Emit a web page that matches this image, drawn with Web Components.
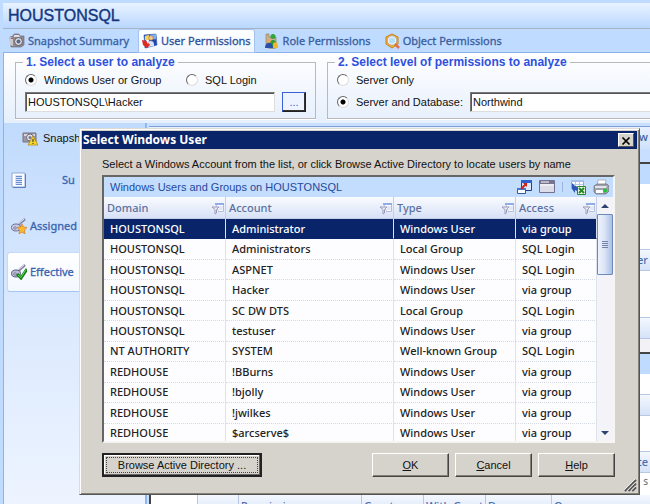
<!DOCTYPE html>
<html lang="en">
<head>
<meta charset="utf-8">
<title>HOUSTONSQL</title>
<style>
html,
body {
    height: 100%;
    margin: 0;
    overflow: hidden;
}
body {
    font: 11px/14px "Liberation Sans", Arial, sans-serif;
    color: #111;
    background: #bfdbff;
    --ui: "Noto Sans", "Open Sans", sans-serif;
    --classic: "Liberation Sans", Arial, sans-serif;
}
</style>
</head>
<body>
<permissions-page></permissions-page>
<script>

const ICONS = {
    camera: `
        <path d="M1 4l3-1 1-2h5l1 2h4v9l-3 2H2z" fill="#8d8a92" stroke="#66636e" stroke-width=".6"/>
        <path d="M1 4l3 1v8l-3-1z" fill="#c9c5c9"/><path d="M5 2h5l1 2H5z" fill="#e0dde2"/>
        <circle cx="9.500" cy="8.500" r="4" fill="#d9dbe2" stroke="#5f5d69"/>
        <circle cx="9.500" cy="8.500" r="2" fill="#5b6684"/><path d="M2 5h2v1H2z" fill="#b55"/>`,
    cameraWarn: `
        <path d="M1 3h13v9H1z" fill="#9d98a4" stroke="#77727f"/><path d="M2 4h11v2H2z" fill="#dcd6dd"/>
        <circle cx="8" cy="7.500" r="3.500" fill="#e6e3ea" stroke="#6d6979"/><circle cx="8" cy="7.500" r="1.500" fill="#78748a"/>
        <path d="M11 6l5 9H6z" fill="#fbd62c" stroke="#a9850c" stroke-width=".7"/><path d="M10.500 9h1v3h-1zM10.500 13h1v1h-1z" fill="#222"/>`,
    user: `
        <path d="M2 2l12-1 1 11-12 3z" fill="#2f62cf" stroke="#25469a" stroke-width=".6"/>
        <path d="M3 3l4-1v5H3z" fill="#f3d35a"/><path d="M8 2l6-1v5H8z" fill="#7cb2f4"/><path d="M9 7h5v5l-5 1z" fill="#1f47a8"/>
        <circle cx="9" cy="5" r="2.300" fill="#f4c99a" stroke="#a75d2c" stroke-width=".5"/>
        <path d="M5 12c0-5 7-5 7-1v2l-6 1z" fill="#d8dff4"/><path d="M0 7l5 1 3 4-3 3-4-3z" fill="#d92d22"/><path d="M4 7h3l-1 4z" fill="#fff"/>`,
    role: `
        <path d="M2 1h3v3h7v11l-5 1-5-2z" fill="#c7b08b" stroke="#806845" stroke-width=".5"/>
        <circle cx="9" cy="3.500" r="2.500" fill="#31a43a"/><path d="M5 13c0-8 8-8 8 0l-4 2z" fill="#2c9c35"/>
        <circle cx="5" cy="8" r="2" fill="#e6a764"/><path d="M1 15c0-7 8-7 8 0z" fill="#2750a8"/>
        <path d="M9 11c1-3 5-2 5 2v2H9z" fill="#f0b62c"/>`,
    object: `
        <path d="M8 1l6 3v7l-6 4-6-4V4z" fill="#f3b13a" stroke="#cf8113"/>
        <circle cx="8" cy="7.500" r="4" fill="#b9e0fa" stroke="#fff" stroke-width="1.500"/>
        <circle cx="8" cy="7.500" r="4.600" fill="none" stroke="#7a8496" stroke-width=".6"/>
        <path d="M11 11l4 4" stroke="#e1714d" stroke-width="2.500"/>`,
    report: `
        <path d="M1 1h13v14H1z" fill="#fff" stroke="#8ca6d8"/><path d="M14.500 2v13.500H2" fill="none" stroke="#5c7dbd"/>
        <path d="M4 3h7v10H4z" fill="#d5e2f8"/><path d="M5 4.500h6M5 6.500h6M5 8.500h6M5 10.500h6M5 12.500h6" stroke="#6a8fd0"/>`,
    keyStar: `
        <path d="M14 1L6 8" stroke="#8788a6" stroke-width="2.500"/><path d="M13 1L6 7" stroke="#e9ebf7"/>
        <ellipse cx="5" cy="9.500" rx="4.500" ry="3.500" fill="#c9cce4" stroke="#71729a"/><circle cx="4" cy="10" r="1.200" fill="#fff" stroke="#71729a"/>
        <path d="M11 6l1.500 3 3.500.5-2.500 2.500.5 4-3-2-3 2 .5-4L6 9.500 9.500 9z" fill="#f9b82f" stroke="#cc6c10" stroke-width=".6"/>`,
    keyCheck: `
        <path d="M14 1L6 8" stroke="#8788a6" stroke-width="2.500"/><path d="M13 1L6 7" stroke="#e9ebf7"/>
        <ellipse cx="5" cy="9.500" rx="4.500" ry="3.500" fill="#b9bcd2" stroke="#5c5d82"/><circle cx="4" cy="10" r="1.200" fill="#fff" stroke="#71729a"/>
        <path d="M6 10l4 4 6-9" fill="none" stroke="#157d18" stroke-width="3"/><path d="M7 11l3 2.500 5-8" fill="none" stroke="#5be04e"/>`,
    filter: `
        <path d="M6.500 3.500h8v8h-5z" fill="#fff" stroke="#b4c1dd"/><path d="M6 3h9v2H6z" fill="#8fade4"/><path d="M10 7h4M10 9h4" stroke="#c5d2ec"/>
        <path d="M3 7h7L7.500 9.500V13L6 14V9.500z" fill="#efeef7" stroke="#9c9abb"/>`,
    chooser: `
        <path d="M5.500 1.500h10v10h-10z" fill="#dbe7fb" stroke="#1d3f94"/><path d="M5 1h11v3H5z" fill="#2d62ce"/>
        <path d="M1.500 10.500h8v4h-8z" fill="#fff" stroke="#33589f"/><path d="M1 9h9v2H1z" fill="#4677cd"/>
        <path d="M5 10l5-5" stroke="#cc2419" stroke-width="2"/><path d="M7 4h4v4z" fill="#cc2419"/>`,
    panel: `
        <path d="M.5 1.500h15v12H.5z" fill="#dcdde9" stroke="#73718d"/><path d="M1 2h14v3H1z" fill="#77758f"/><path d="M2 3h8" stroke="#fff"/><path d="M1 6h14" stroke="#fff"/>`,
    excel: `
        <path d="M1.500 1.500h12v8h-12z" fill="#fff" stroke="#8ba7da"/><path d="M1 1h13v2H1z" fill="#a5bfe9"/><path d="M5.500 3v6M9.500 3v6M2 5.500h11" stroke="#b6c8e8"/>
        <path d="M2 4v6l3 4v-3l4 2V8L5 7z" fill="#2c58b3"/>
        <path d="M7.500 7.500h8v8h-8z" fill="#e9f7e5" stroke="#238727"/><path d="M9 9l5 5M14 9l-5 5" stroke="#238727" stroke-width="2"/>`,
    printer: `
        <path d="M5 1h8l-1 6H4z" fill="#fff" stroke="#9899a6" stroke-width=".7"/><path d="M1 7l3-2h10l2 2v5l-3 3H3l-2-2z" fill="#9fa0ad" stroke="#696a77" stroke-width=".7"/>
        <path d="M2 7h12l-1 2H2z" fill="#e3e4ea"/><path d="M3 11h7v3H3z" fill="#fff"/><circle cx="12" cy="11.500" r="2" fill="#22c331"/>`,
    cross: `<path d="M4 4l8 8M12 4l-8 8" stroke="#000" stroke-width="2"/>`,
    grip: `<path d="M3 15L15 3M7 15l8-8M11 15l4-4" stroke="#555" stroke-width="2"/><path d="M2 14L14 2M6 14l8-8M10 14l4-4" stroke="#fff" stroke-width=".7"/>`
};

customElements.define( 'ui-icon', class extends HTMLElement {

    constructor() {
        super();
        this.attachShadow({ mode: 'open' });
    }

    connectedCallback() {
        this.shadowRoot.innerHTML = `
        <style>
        :host { display: block; flex: none; width: 16px; height: 16px; }
        svg { display: block; width: 100%; height: 100%; }
        </style>
        <svg viewBox="0 0 16 16" fill="none" aria-hidden="true">${ ICONS[ this.getAttribute('name') ] }</svg>
        `;
    }
})

customElements.define( 'page-tab', class extends HTMLElement {

    constructor() {
        super();
        this.attachShadow({ mode: 'open' });
        this.shadowRoot.innerHTML = `
        <style>
        :host { display: block; }
        button {
            display: flex;
            align-items: center;
            gap: 3px;
            height: 100%;
            padding: 0 3px;
            border: 0;
            background: none;
            color: #3a5e9f;
            font: 11px/16px var(--ui);
            -webkit-text-stroke: .3px;
            white-space: nowrap;
        }
        :host([selected]) button {
            background: linear-gradient(#fff, #f1f6ff);
            border-radius: 2px 2px 0 0;
            box-shadow: 0 0 0 1px #a5c3ee;
            color: #2a509c;
        }
        </style>
        <button role="tab"><slot name="icon"></slot><slot></slot></button>
        `;
    }
})

customElements.define( 'field-group', class extends HTMLElement {

    constructor() {
        super();
        this.attachShadow({ mode: 'open' });
        this.shadowRoot.innerHTML = `
        <style>
        :host { display: block; }
        fieldset {
            display: flex;
            flex-direction: column;
            gap: 2px;
            margin: 0;
            padding: 1px 9px 6px;
            min-width: 0;
            border: 1px solid #b9b9b9;
            box-shadow: 0 1px #fff;
        }
        legend {
            margin-left: -2px;
            padding: 0 3px;
            color: #2f50dd;
            font: bold 12px/14px var(--classic);
            white-space: nowrap;
        }
        </style>
        <fieldset>
            <legend><slot name="legend"></slot></legend>
            <slot></slot>
        </fieldset>
        `;
    }
})

customElements.define( 'radio-option', class extends HTMLElement {

    constructor() {
        super();
        this.attachShadow({ mode: 'open' });
    }

    connectedCallback() {
        this.shadowRoot.innerHTML = `
        <style>
        :host { display: block; flex: none; }
        label { display: flex; align-items: center; gap: 7px; white-space: nowrap; }
        input {
            appearance: none;
            width: 12px;
            height: 12px;
            margin: 0;
            border: 1px solid;
            border-color: #666 #ddd #ddd #666;
            border-radius: 50%;
            background: #fff;
        }
        input:checked { background: radial-gradient(circle, #000 2px, #fff 3px); }
        </style>
        <label><input type="radio" ${ this.hasAttribute('checked') ? 'checked' : '' }><span><slot></slot></span></label>
        `;
    }
})

customElements.define( 'text-field', class extends HTMLElement {

    constructor() {
        super();
        this.attachShadow({ mode: 'open' });
    }

    connectedCallback() {
        this.shadowRoot.innerHTML = `
        <style>
        :host { display: block; flex: 1; min-width: 0; }
        input {
            display: block;
            box-sizing: border-box;
            width: 100%;
            height: 20px;
            padding: 0 2px;
            border: 1px solid;
            border-color: #777 #ddd #ddd #777;
            box-shadow: inset 1px 1px #555;
            background: #fff;
            color: #111;
            font: 11px/16px var(--classic);
        }
        </style>
        <input type="text" aria-label="${ this.getAttribute('label') }" value="${ this.getAttribute('value') }">
        `;
    }
})

customElements.define( 'nav-item', class extends HTMLElement {

    constructor() {
        super();
        this.attachShadow({ mode: 'open' });
        this.shadowRoot.innerHTML = `
        <style>
        :host { display: block; }
        a {
            display: flex;
            align-items: center;
            gap: 3px;
            box-sizing: border-box;
            height: 40px;
            margin: 0 3px 6px;
            padding: 0 3px;
            border: 1px solid transparent;
            color: #3763ae;
            font: 11px/16px var(--ui);
            -webkit-text-stroke: .3px;
            text-decoration: none;
        }
        span { white-space: nowrap; }
        :host([centered]) span { padding-left: 32px; }
        :host([selected]) a {
            border-color: #c4dafb #a3c5f6 #a3c5f6 #c4dafb;
            border-radius: 3px;
            background: linear-gradient(#fff, #f3f8ff);
        }
        </style>
        <a href="#"><slot name="icon"></slot><span><slot></slot></span></a>
        `;
    }
})

customElements.define( 'classic-button', class extends HTMLElement {

    constructor() {
        super();
        this.attachShadow({ mode: 'open' });
        this.shadowRoot.innerHTML = `
        <style>
        :host { display: block; }
        button {
            box-sizing: border-box;
            width: 77px;
            height: 24px;
            padding: 0;
            border: 1px solid;
            border-color: #fff #444 #444 #fff;
            box-shadow: inset -1px -1px #848078;
            background: #d6d3cd;
            color: #111;
            font: 11px/16px var(--classic);
        }
        :host([focused]) button {
            width: 160px;
            border: 2px solid #222;
            box-shadow: inset -1px -1px #666, inset 1px 1px #fff;
            outline: 1px dotted #444;
            outline-offset: -5px;
        }
        :host([square]) button {
            width: 24px;
            height: 20px;
            border: 1px solid;
            border-color: #3c5ed8 #222 #222 #3c5ed8;
            box-shadow: inset -1px -1px #333;
            background: #eef4ff;
            color: #3c5ed8;
        }
        </style>
        <button><slot></slot></button>
        `;
    }
})

customElements.define( 'user-grid', class extends HTMLElement {

    columns = [ 'Domain', 'Account', 'Type', 'Access' ]

    rows = [
        [ 'HOUSTONSQL', 'Administrator', 'Windows User', 'via group' ],
        [ 'HOUSTONSQL', 'Administrators', 'Local Group', 'SQL Login' ],
        [ 'HOUSTONSQL', 'ASPNET', 'Windows User', 'SQL Login' ],
        [ 'HOUSTONSQL', 'Hacker', 'Windows User', 'via group' ],
        [ 'HOUSTONSQL', 'SC DW DTS', 'Local Group', 'SQL Login' ],
        [ 'HOUSTONSQL', 'testuser', 'Windows User', 'via group' ],
        [ 'NT AUTHORITY', 'SYSTEM', 'Well-known Group', 'SQL Login' ],
        [ 'REDHOUSE', '!BBurns', 'Windows User', 'via group' ],
        [ 'REDHOUSE', '!bjolly', 'Windows User', 'via group' ],
        [ 'REDHOUSE', '!jwilkes', 'Windows User', 'via group' ],
        [ 'REDHOUSE', '$arcserve$', 'Windows User', 'via group' ]
    ]

    constructor() {
        super();
        this.attachShadow({ mode: 'open' });
        this.#render();
    }

    #render() {
        this.shadowRoot.innerHTML = `
        <style>
        :host {
            display: block;
            border: 2px solid;
            border-color: #666 #f6f5f2 #f6f5f2 #666;
            background: #fdfdff;
        }
        header {
            display: flex;
            align-items: center;
            height: 20px;
            padding: 0 4px 0 6px;
            background: #c3ddff;
            color: #24499b;
        }
        header span { flex: 1; }
        .tools { display: flex; gap: 7px; }
        .tools i { width: 1px; margin: 3px 0; background: #9db6dc; }
        .body { display: flex; max-height: 244px; overflow: hidden; }
        table {
            flex: 1;
            height: 247px;
            border-collapse: separate;
            border-spacing: 0;
            table-layout: fixed;
            font: 500 11px/16px var(--ui);
        }
        th, td {
            box-sizing: border-box;
            padding: 0 6px;
            border-right: 1px solid #dce3ef;
            text-align: left;
            white-space: nowrap;
            overflow: hidden;
            color: #222;
        }
        th {
            height: 22px;
            padding: 0 0 0 3px;
            border-bottom: 1px solid #c3cfe6;
            border-right-color: #c3cfe6;
            background: linear-gradient(#fafbff, #d7e1f6);
            color: #5a719f;
            font-weight: 500;
        }
        th div { display: flex; justify-content: space-between; align-items: center; }
        th:nth-child(1), th:nth-child(3) { width: 122px; }
        th:nth-child(4) { width: 81px; }
        td { border-bottom: 1px dotted #d4d9e4; }
        tr.selected td { background: #0a246a; color: #fff; border-bottom-color: #0a246a; }
        .scroll {
            display: flex;
            flex-direction: column;
            width: 16px;
            height: 244px;
            background: #f4f4f8;
        }
        .scroll b { flex: none; height: 17px; display: grid; place-items: center; }
        .scroll b::after { content: ""; border: 4px solid transparent; border-top: 0; border-bottom-color: #2c4270; }
        .scroll b.down::after { border-top: 4px solid #2c4270; border-bottom: 0; }
        .thumb {
            display: grid;
            place-items: center;
            box-sizing: border-box;
            height: 61px;
            margin-bottom: auto;
            border: 1px solid #6e88ba;
            border-radius: 1px;
            background: linear-gradient(to right, #edf2fc, #dde6f7 45%, #a9bfe6);
        }
        .thumb::after {
            content: "";
            width: 6px;
            height: 7px;
            background: repeating-linear-gradient(#7384a6 0 1px, transparent 1px 2px);
        }
        </style>
        <header>
            <span>Windows Users and Groups on HOUSTONSQL</span>
            <div class="tools">
                <ui-icon name="chooser"></ui-icon>
                <ui-icon name="panel"></ui-icon>
                <i></i>
                <ui-icon name="excel"></ui-icon>
                <ui-icon name="printer"></ui-icon>
            </div>
        </header>
        <div class="body">
            <table>
                <thead><tr>${ this.columns
                    .map( name => `<th><div>${ name }<ui-icon name="filter"></ui-icon></div></th>` )
                    .join('')
                }</tr></thead>
                <tbody>${ this.rows
                    .map( ( row, i ) => `<tr${ i ? '' : ' class="selected"' }>${ row.map( cell => `<td>${ cell }</td>` ).join('') }</tr>` )
                    .join('')
                }</tbody>
            </table>
            <div class="scroll"><b></b><div class="thumb"></div><b class="down"></b></div>
        </div>
        `;
    }
})

customElements.define( 'classic-dialog', class extends HTMLElement {

    constructor() {
        super();
        this.attachShadow({ mode: 'open' });
        this.shadowRoot.innerHTML = `
        <style>
        :host {
            display: block;
            border: 1px solid;
            border-color: #dedbd4 #555 #555 #dedbd4;
            box-shadow: inset 1px 1px #fff, inset -1px -1px #858178;
            background: #d6d3cd;
            padding: 2px;
        }
        header {
            display: flex;
            align-items: center;
            height: 18px;
            padding: 0 3px 0 1px;
            background: #0a246a;
            color: #fff;
        }
        h2 { flex: 1; margin: 0; font: bold 12px/16px var(--ui); }
        header button {
            display: grid;
            place-items: center;
            width: 16px;
            height: 14px;
            padding: 0;
            border: 1px solid;
            border-color: #fff #555 #555 #fff;
            background: #d6d3cd;
        }
        header ui-icon { width: 14px; height: 14px; }
        .content { padding: 8px 22px 0 20px; }
        footer { display: flex; justify-content: flex-end; }
        footer ui-icon { width: 15px; height: 15px; }
        </style>
        <header>
            <h2><slot name="title"></slot></h2>
            <button aria-label="Close"><ui-icon name="cross"></ui-icon></button>
        </header>
        <div class="content"><slot></slot></div>
        <footer><ui-icon name="grip"></ui-icon></footer>
        `;
    }
})

customElements.define( 'permissions-page', class extends HTMLElement {

    constructor() {
        super();
        this.attachShadow({ mode: 'open' });
        this.#render();
    }

    #render() {
        this.shadowRoot.innerHTML = `
        <style>
        :host {
            display: flex;
            flex-direction: column;
            box-sizing: border-box;
            height: 100%;
            padding: 3px 0 0 3px;
            position: relative;
            overflow: hidden;
        }
        h1 {
            margin: 0;
            padding: 0 5px;
            border-bottom: 1px solid #a9b4c6;
            background: linear-gradient(#e9f3ff, #b9d7ff);
            color: #15367e;
            font: 16px/25px var(--classic);
            -webkit-text-stroke: .4px;
        }
        nav { display: flex; gap: 7px; height: 22px; padding: 1px 3px 0; border-bottom: 1px solid #8db2e8; }
        .steps {
            display: flex;
            gap: 11px;
            padding: 2px 0 4px 11px;
            border-left: 1px solid #8db2e8;
            background: linear-gradient(#fff, #e6effc);
        }
        .first { flex: 0 0 301px; }
        .second { flex: 1; margin-right: -12px; }
        .row { display: flex; align-items: center; height: 20px; }
        .row.gap { gap: 7px; }
        .row.pair > :first-child { width: 161px; }
        .lower { display: flex; flex: 1; min-height: 0; border-left: 1px solid #8db2e8; }
        aside {
            width: 141px;
            border-right: 2px solid #8db8f4;
            background: linear-gradient(#c1dbfd, #dbe9fe 50%, #edf4ff);
        }
        .snap { display: flex; align-items: center; gap: 5px; height: 30px; margin-bottom: 7px; padding-left: 18px; }
        .panes { flex: 1; display: flex; flex-direction: column; padding-left: 2px; overflow: hidden; background: #c9dfff; }
        .pane {
            flex: none;
            box-sizing: border-box;
            border-top: 2px solid #444;
            border-left: 2px solid #444;
            background: #fff;
            overflow: hidden;
            color: #4a6dae;
            font: 500 11px/20px var(--ui);
        }
        .show {
            height: 22px;
            margin: 3px 0 13px;
            padding-right: 2px;
            border-top: 1px solid #7f9fd6;
            background: linear-gradient(#e6f0ff, #cfe1fb);
            color: #3a5e9f;
            font: 500 11px/20px var(--ui);
            text-align: right;
        }
        .bar { height: 20px; background: #bfdbff; }
        .head {
            box-sizing: border-box;
            height: 22px;
            padding-right: 2px;
            border-top: 1px solid #b8c7e2;
            border-bottom: 1px solid #b8c7e2;
            background: linear-gradient(#f4f8ff, #d5e2f8);
            text-align: right;
        }
        .note { height: 22px; padding-right: 2px; color: #777; font-size: 10px; line-height: 16px; text-align: right; }
        .foot { height: 20px; background: #f3f1f5; }
        .top { height: 190px; }
        .top .space { height: 65px; }
        .top .list { height: 46px; }
        .bottom { flex: 1; }
        .bottom .space { height: 20px; }
        .bottom .wide { height: 35px; }
        table {
            width: 100%;
            border-collapse: collapse;
            table-layout: fixed;
            background: linear-gradient(#f4f8ff, #d5e2f8);
            text-align: left;
        }
        th { padding: 0 2px; border-left: 1px solid #b8c7e2; font-weight: 500; white-space: nowrap; line-height: 22px; }
        th:nth-child(1) { width: 42px; background: #fff; border: 0; }
        th:nth-child(2) { width: 36px; }
        th:nth-child(3) { width: 118px; }
        th:nth-child(4), th:nth-child(5) { width: 57px; }
        th:nth-child(6) { width: 61px; }
        classic-dialog {
            position: absolute;
            left: 79px;
            right: 10px;
            top: 128px;
        }
        p { margin: 0 0 4px; line-height: 14px; white-space: nowrap; }
        .actions { display: flex; gap: 6px; padding-top: 10px; }
        .actions :first-child { margin-right: auto; }
        </style>
        <h1>HOUSTONSQL</h1>
        <nav role="tablist">
            <page-tab><ui-icon slot="icon" name="camera"></ui-icon>Snapshot Summary</page-tab>
            <page-tab selected><ui-icon slot="icon" name="user"></ui-icon>User Permissions</page-tab>
            <page-tab><ui-icon slot="icon" name="role"></ui-icon>Role Permissions</page-tab>
            <page-tab><ui-icon slot="icon" name="object"></ui-icon>Object Permissions</page-tab>
        </nav>
        <div class="steps">
            <field-group class="first">
                <span slot="legend">1. Select a user to analyze</span>
                <div class="row pair">
                    <radio-option checked>Windows User or Group</radio-option>
                    <radio-option>SQL Login</radio-option>
                </div>
                <div class="row gap">
                    <text-field label="Windows user or group" value="HOUSTONSQL\\Hacker"></text-field>
                    <classic-button square>...</classic-button>
                </div>
            </field-group>
            <field-group class="second">
                <span slot="legend">2. Select level of permissions to analyze</span>
                <div class="row"><radio-option>Server Only</radio-option></div>
                <div class="row gap">
                    <radio-option checked>Server and Database:</radio-option>
                    <text-field label="Database" value="Northwind"></text-field>
                </div>
            </field-group>
        </div>
        <div class="lower">
            <aside>
                <div class="snap"><ui-icon name="cameraWarn"></ui-icon>Snapsh</div>
                <nav-item centered><ui-icon slot="icon" name="report"></ui-icon>Su</nav-item>
                <nav-item><ui-icon slot="icon" name="keyStar"></ui-icon>Assigned</nav-item>
                <nav-item selected><ui-icon slot="icon" name="keyCheck"></ui-icon>Effective</nav-item>
            </aside>
            <div class="panes">
                <div class="show">ow</div>
                <div class="pane top">
                    <div class="bar"></div>
                    <div class="space"></div>
                    <div class="head">er</div>
                    <div class="list"></div>
                    <div class="head"></div>
                    <div class="foot"></div>
                </div>
                <div class="pane bottom">
                    <div class="bar"></div>
                    <div class="space"></div>
                    <div class="head"></div>
                    <div class="wide"></div>
                    <div class="head">te</div>
                    <div class="note">s</div>
                    <table><tr><th></th><th></th><th>Permission</th><th>Grantor</th><th>With Grant</th><th>Deny</th><th>Owner</th></tr></table>
                </div>
            </div>
        </div>
        <classic-dialog role="dialog">
            <span slot="title">Select Windows User</span>
            <p>Select a Windows Account from the list, or click Browse Active Directory to locate users by name</p>
            <user-grid></user-grid>
            <div class="actions">
                <classic-button focused>Browse Active Directory ...</classic-button>
                <classic-button><u>O</u>K</classic-button>
                <classic-button><u>C</u>ancel</classic-button>
                <classic-button><u>H</u>elp</classic-button>
            </div>
        </classic-dialog>
        `;
    }
})
</script>
</body>
</html>
